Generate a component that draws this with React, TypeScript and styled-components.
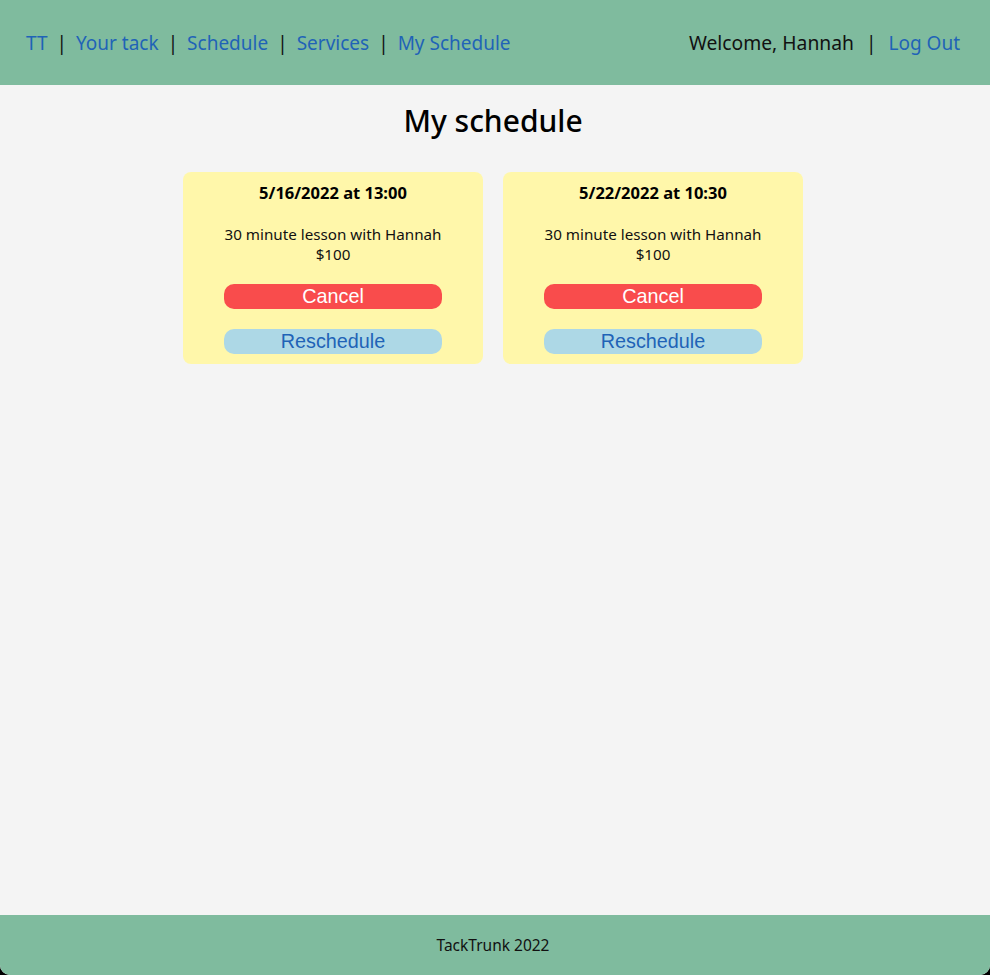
import React from "react";
import styled, { createGlobalStyle } from "styled-components";

const Global = createGlobalStyle`
  html { background: #000; }
  body { margin: 0; font-family: "Noto Sans", "Open Sans", sans-serif; }
`;

const Page = styled.div`
  min-height: 975px;
  display: flex;
  flex-direction: column;
  background: #f4f4f4;
  border-radius: 0 0 10px 10px;
  overflow: hidden;
`;

const Header = styled.header`
  height: 85px;
  background: #7fbb9e;
  display: flex;
  align-items: center;
  justify-content: space-between;
  padding: 0 30px 0 26px;
  font-size: 19px;
  box-sizing: border-box;
`;

const NavGroup = styled.nav`
  display: flex;
  align-items: center;
`;

const NavLink = styled.a`
  color: #1f63b7;
  text-decoration: none;
`;

const Sep = styled.span<{ $gap?: number }>`
  color: #111;
  margin: 0 ${(p) => p.$gap ?? 9}px;
`;

const Plain = styled.span`
  color: #111;
  font-size: 19.3px;
`;

const Main = styled.main`
  flex: 1;
  display: flex;
  flex-direction: column;
  align-items: center;
  padding: 18px 4px 0 0;
`;

const Title = styled.h1`
  margin: 0 0 33px;
  font-size: 30px;
  line-height: 36px;
  font-weight: 500;
  color: #000;
`;

const Cards = styled.div`
  display: flex;
  gap: 20px;
`;

const Card = styled.div`
  width: 300px;
  background: #fff7aa;
  border-radius: 8px;
  padding: 10px 0 10px;
  display: flex;
  flex-direction: column;
  align-items: center;
  box-sizing: border-box;
`;

const CardDate = styled.div`
  font-size: 16.5px;
  font-weight: 700;
  line-height: 22px;
  color: #000;
`;

const CardText = styled.div`
  font-size: 15.2px;
  line-height: 20px;
  text-align: center;
  margin-top: 20px;
  color: #111;
`;

const Button = styled.button<{ $variant: "cancel" | "reschedule" }>`
  width: 218px;
  height: 25px;
  border: none;
  border-radius: 10px;
  font-family: "Liberation Sans", Arial, sans-serif;
  font-size: 19.8px;
  line-height: 25px;
  padding: 0;
  margin-top: 20px;
  background: ${(p) => (p.$variant === "cancel" ? "#f94c4c" : "#add8e6")};
  color: ${(p) => (p.$variant === "cancel" ? "#fff" : "#1f63b7")};
`;

const Footer = styled.footer`
  height: 60px;
  background: #7fbb9e;
  display: flex;
  align-items: center;
  justify-content: center;
  padding-right: 4px;
  font-size: 15.5px;
  color: #111;
`;

const items = [
  { date: "5/16/2022 at 13:00" },
  { date: "5/22/2022 at 10:30" },
];

export default function App() {
  const links = ["TT", "Your tack", "Schedule", "Services", "My Schedule"];
  return (
    <Page>
      <Global />
      <Header>
        <NavGroup>
          {links.map((l, i) => (
            <React.Fragment key={l}>
              {i > 0 && <Sep>|</Sep>}
              <NavLink href="#">{l}</NavLink>
            </React.Fragment>
          ))}
        </NavGroup>
        <NavGroup>
          <Plain>Welcome, Hannah</Plain>
          <Sep $gap={12}>|</Sep>
          <NavLink href="#">Log Out</NavLink>
        </NavGroup>
      </Header>
      <Main>
        <Title>My schedule</Title>
        <Cards>
          {items.map((it) => (
            <Card key={it.date}>
              <CardDate>{it.date}</CardDate>
              <CardText>
                30 minute lesson with Hannah
                <br />$100
              </CardText>
              <Button $variant="cancel">Cancel</Button>
              <Button $variant="reschedule">Reschedule</Button>
            </Card>
          ))}
        </Cards>
      </Main>
      <Footer>TackTrunk 2022</Footer>
    </Page>
  );
}
